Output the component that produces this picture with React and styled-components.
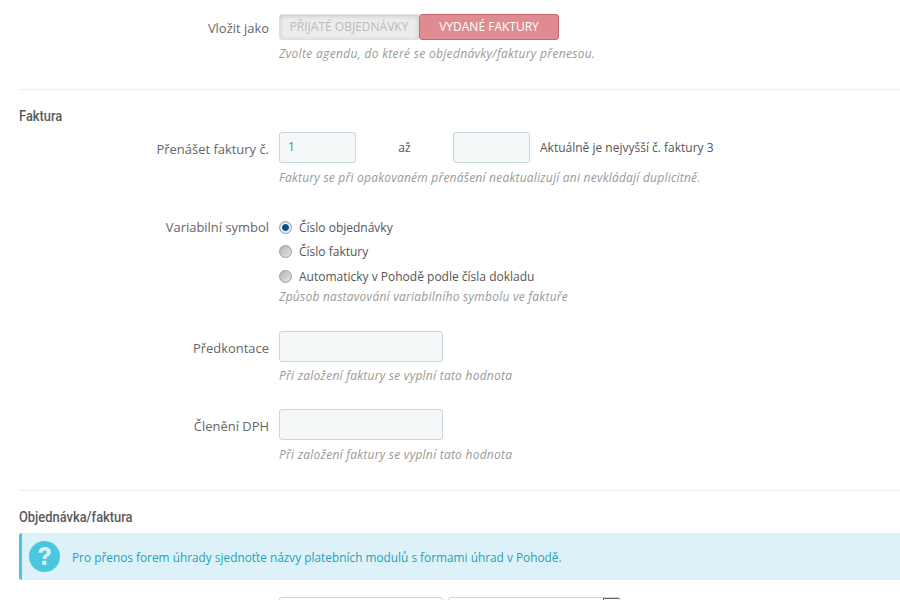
import React from "react";
import styled, { createGlobalStyle } from "styled-components";

const Global = createGlobalStyle`
  html, body { margin: 0; padding: 0; background: #fff; height: 600px; overflow: hidden; }
  body { font-family: "Open Sans", "Noto Sans", sans-serif; font-size: 12px; color: #666; }
`;

const Page = styled.div`
  width: 881px;
  height: 600px;
  margin-left: 19px;
  padding-top: 14px;
  box-sizing: border-box;
  overflow: hidden;
`;

const Row = styled.div`
  display: grid;
  grid-template-columns: 250px 1fr;
  column-gap: 10px;
  margin-top: ${(p) => p.$mt || 0}px;
`;

const Label = styled.label`
  text-align: right;
  font-size: 12.95px;
  line-height: 18px;
  color: #666;
  padding-top: ${(p) => p.$pt ?? 8}px;
`;

const Control = styled.div`
  display: flex;
  flex-direction: column;
  min-width: 0;
`;

const Switch = styled.div`
  display: flex;
  height: 26px;
`;

const SwitchOff = styled.div`
  width: 140px;
  box-sizing: border-box;
  background: #ececec;
  border: 1px solid #e0e0e0;
  border-radius: 3px 0 0 3px;
  color: #bbb;
  font-size: 12px;
  line-height: 24px;
  text-align: center;
  box-shadow: inset 0 1px 4px rgba(0, 0, 0, 0.16);
`;

const SwitchOn = styled.div`
  width: 140px;
  box-sizing: border-box;
  background: #e08b91;
  border: 1px solid #c9676e;
  border-radius: 3px;
  color: #fff;
  font-size: 12px;
  line-height: 24px;
  text-align: center;
`;

const Help = styled.p`
  margin: ${(p) => p.$mt ?? 6}px 0 0;
  font-size: 12px;
  letter-spacing: ${(p) => p.$ls ?? 0.25}px;
  line-height: 16px;
  font-style: italic;
  color: #999;
  white-space: nowrap;
`;

const Rule = styled.hr`
  border: 0;
  border-top: 1px solid #eee;
  margin: ${(p) => p.$mt}px 0 0;
`;

const Heading = styled.h3`
  margin: 17px 0 0;
  font-family: "Roboto", sans-serif;
  font-size: 14px;
  line-height: 18px;
  font-weight: 500;
  color: #5a5a5a;
  transform-origin: left center;
  transform: scaleX(0.92);
`;

const Inline = styled.div`
  display: flex;
  align-items: center;
  height: 31px;
`;

const Input = styled.div`
  box-sizing: border-box;
  width: ${(p) => p.$w}px;
  height: 31px;
  flex: none;
  background: #f5f8f9;
  border: 1px solid #c7d6db;
  border-radius: 3px;
  color: #4a7fa0;
  font-size: 12px;
  line-height: 27px;
  padding-left: 8px;
`;

const Between = styled.span`
  width: 97px;
  flex: none;
  text-align: center;
  color: #555;
  font-size: 12px;
`;

const Note = styled.span`
  margin-left: 10px;
  font-size: 12px;
  color: #555;
  white-space: nowrap;
`;

const RadioList = styled.div`
  display: flex;
  flex-direction: column;
  gap: 6.5px;
  margin-bottom: 4px;
`;

const RadioRow = styled.div`
  display: flex;
  align-items: center;
  gap: 7px;
  height: 18px;
  font-size: 12px;
  color: #555;
`;

const RadioDot = styled.span`
  width: 13px;
  height: 13px;
  border-radius: 50%;
  box-sizing: border-box;
  flex: none;
  border: 1px solid #9c9c9c;
  background: ${(p) =>
    p.$on
      ? "radial-gradient(circle at 50% 50%, #0b4f8a 0, #0b4f8a 3px, #e6edf2 3.8px, #d8d8d8 100%)"
      : "linear-gradient(135deg, #b4b4b4, #e6e6e6)"};
`;

const Alert = styled.div`
  display: flex;
  align-items: center;
  gap: 12px;
  height: 47px;
  box-sizing: border-box;
  margin-top: 7px;
  padding-left: 7px;
  background: #dcf2f8;
  border-left: 3px solid #4ac7e0;
  border-radius: 3px 0 0 3px;
  color: #2a9fb8;
  font-size: 11.85px;
`;

const Select = styled.div`
  box-sizing: border-box;
  height: 31px;
  width: ${(p) => p.$w}px;
  flex: none;
  background: #fff;
  border: 1px solid #c7d6db;
  border-radius: 3px;
  position: relative;
  overflow: hidden;
`;

const SelectTab = styled.span`
  position: absolute;
  right: 0;
  top: 0;
  bottom: 0;
  width: 16px;
  border-left: 1px solid #666;
  border-top: 1px solid #666;
`;

const SelectRow = styled.div`
  display: flex;
  gap: 5px;
`;

const HelpIconSvg = styled.svg`
  flex: none;
`;

const HelpIcon = () => (
  <HelpIconSvg width="31" height="31" viewBox="0 0 32 32">
    <circle cx="16" cy="16" r="16" fill="#4ac7e0" />
    <path
      d="M9.8 12.2c.2-3.8 2.8-6 6.5-6 3.6 0 6.2 2.1 6.2 5.2 0 2.2-1.1 3.3-2.6 4.4-1.3.9-1.7 1.4-1.7 2.7h-4c0-2.6.7-3.7 2.4-4.9 1.1-.8 1.7-1.2 1.7-2.1 0-1-.8-1.6-1.9-1.6-1.3 0-2.1.9-2.3 2.3z"
      fill="#dcf2f8"
    />
    <rect x="13.6" y="20.4" width="4.3" height="4.3" fill="#dcf2f8" />
  </HelpIconSvg>
);

export default function App() {
  return (
    <Page>
      <Global />
      <Row>
        <Label $pt={5}>Vložit jako</Label>
        <Control>
          <Switch>
            <SwitchOff>PŘIJATÉ OBJEDNÁVKY</SwitchOff>
            <SwitchOn>VYDANÉ FAKTURY</SwitchOn>
          </Switch>
          <Help $ls={0.32}>Zvolte agendu, do které se objednávky/faktury přenesou.</Help>
        </Control>
      </Row>
      <Rule $mt={27} />
      <Heading>Faktura</Heading>
      <Row $mt={7}>
        <Label>Přenášet faktury č.</Label>
        <Control>
          <Inline>
            <Input $w={77}>1</Input>
            <Between>až</Between>
            <Input $w={77} />
            <Note>Aktuálně je nejvyšší č. faktury 3</Note>
          </Inline>
          <Help $mt={7} $ls={0.22}>Faktury se při opakovaném přenášení neaktualizují ani nevkládají duplicitně.</Help>
        </Control>
      </Row>
      <Row $mt={32}>
        <Label $pt={0}>Variabilní symbol</Label>
        <Control>
          <RadioList>
            <RadioRow><RadioDot $on />Číslo objednávky</RadioRow>
            <RadioRow><RadioDot />Číslo faktury</RadioRow>
            <RadioRow><RadioDot />Automaticky v Pohodě podle čísla dokladu</RadioRow>
          </RadioList>
          <Help $mt={0}>Způsob nastavování variabilního symbolu ve faktuře</Help>
        </Control>
      </Row>
      <Row $mt={26}>
        <Label>Předkontace</Label>
        <Control>
          <Input $w={164} />
          <Help>Při založení faktury se vyplní tato hodnota</Help>
        </Control>
      </Row>
      <Row $mt={25}>
        <Label>Členění DPH</Label>
        <Control>
          <Input $w={164} />
          <Help $mt={7}>Při založení faktury se vyplní tato hodnota</Help>
        </Control>
      </Row>
      <Rule $mt={27} />
      <Heading>Objednávka/faktura</Heading>
      <Alert>
        <HelpIcon />
        Pro přenos forem úhrady sjednoťte názvy platebních modulů s formami úhrad v Pohodě.
      </Alert>
      <Row $mt={17}>
        <span />
        <SelectRow>
          <Select $w={164} />
          <Select $w={173}><SelectTab /></Select>
        </SelectRow>
      </Row>
    </Page>
  );
}
